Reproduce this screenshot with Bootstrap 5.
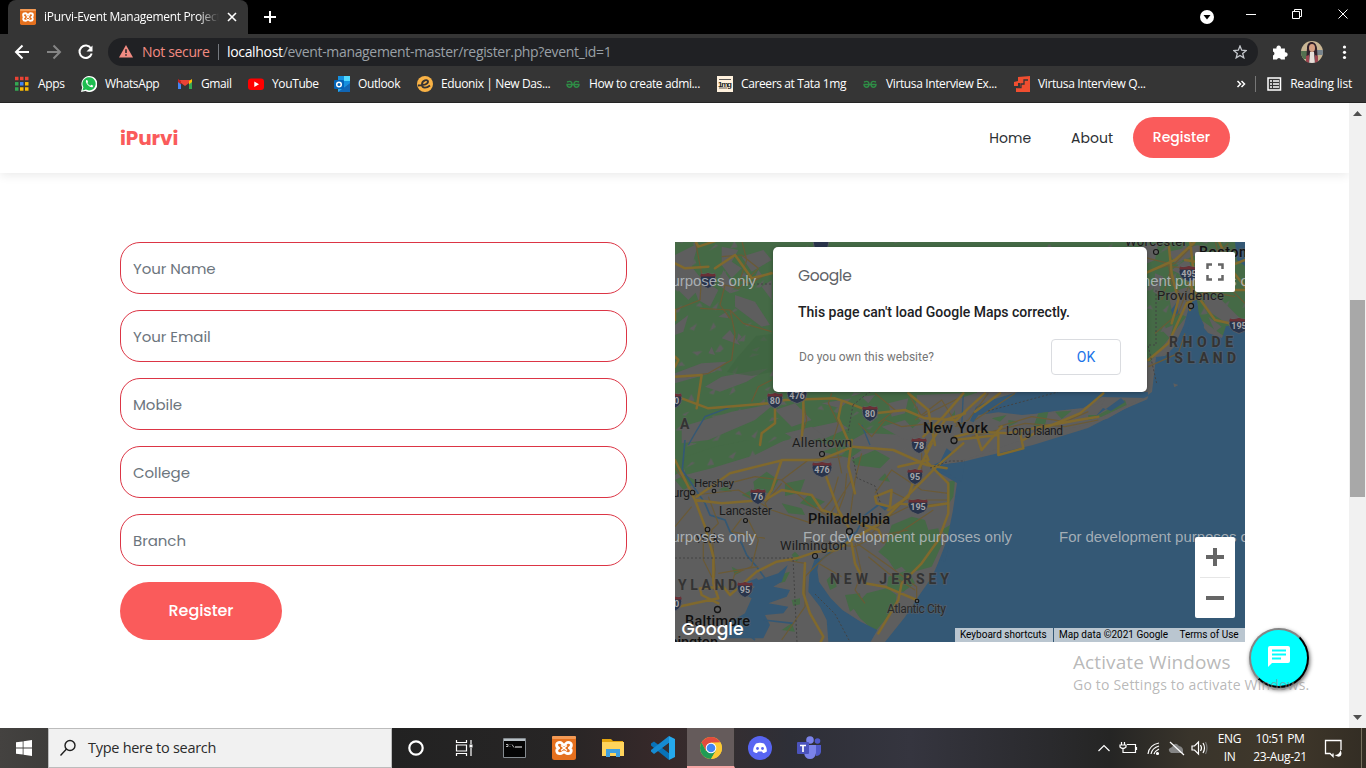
<!DOCTYPE html>
<html lang="en">
<head>
<meta charset="utf-8">
<meta name="viewport" content="width=device-width, initial-scale=1">
<title>iPurvi-Event Management Project</title>
<link href="https://cdn.jsdelivr.net/npm/bootstrap@5.3.0/dist/css/bootstrap.min.css" rel="stylesheet">
<style>
  :root { --chrome:#353535; --coral:#fa5b5b; --ui:"Segoe UI","Open Sans","Noto Sans",sans-serif; --site:"Poppins","Inter",sans-serif; }
  body { width:1366px; height:768px; overflow:hidden; background:#fff; font-family:var(--ui); }
  svg { display:block; flex:none; }
  .tabstrip { height:34px; background:#000; padding-left:8px; }
  .browser-tab { width:240px; height:34px; background:var(--chrome); border-radius:8px 8px 0 0; padding:0 11px 0 12px; color:#fff; font-size:12px; letter-spacing:-.31px; }
  .tab-title { width:175px; margin-left:8px; overflow:hidden; -webkit-mask-image:linear-gradient(90deg,#000 88%,transparent); }
  .toolbar { height:36px; background:var(--chrome); }
  .omnibox { width:1150px; height:28px; border-radius:14px; background:#202124; font-size:14px; color:#9aa0a6; padding:0 11px 1px 11px; margin-left:13px; }
  .bookmarks { height:33px; background:var(--chrome); border-bottom:1px solid #242424; color:#fff; font-size:12px; letter-spacing:-.38px; padding:0 14px 4px 14px; }
  .bm-list { display:grid; grid-template-columns:67px 96px 71px 86px 83px 148px 152px 145px 152px 160px; }
  .bm-list > div { display:flex; align-items:center; gap:8px; white-space:nowrap; }
  .bm-list svg { width:16px; height:16px; }
  .viewport { height:625px; }
  .page { width:1349px; overflow:hidden; position:relative; font-family:var(--site); }
  .site-nav { height:70px; padding:0 119px 0 120px; box-shadow:0 2px 10px rgba(0,0,0,.09); }
  .site-brand { color:var(--coral); font-weight:700; font-size:20px; letter-spacing:-.1px; }
  .site-link { color:#2c3034; font-size:14px; }
  .pill { background:var(--coral); border:0; color:#fff; border-radius:30px; }
  .nav-pill { width:97px; height:41px; border-radius:21px; font-size:14px; font-weight:500; letter-spacing:0; margin-left:20px; margin-bottom:1px; }
  .signup { padding:69px 104px 0 120px; gap:48px; }
  .fields { width:507px; gap:16px; }
  .fields .form-control { height:52px; border:1px solid #dc3545; border-radius:20px; padding:7px 12px 6px; font-size:15px; }
  .fields .form-control::placeholder { color:#6c757d; opacity:1; letter-spacing:-.05px; }
  .send { width:162px; height:58px; font-size:16px; font-weight:500; letter-spacing:-.1px; }
  .map-box { width:570px; height:400px; position:relative; overflow:hidden; font-family:Roboto,sans-serif; }
  .map-dialog { position:absolute; left:98px; top:5px; width:374px; height:145px; background:#fff; border-radius:5px; padding:17px 26px 17px 25px; box-shadow:0 1px 4px rgba(0,0,0,.3); }
  .map-ok { width:70px; height:36px; border:1px solid #dadce0; border-radius:4px; background:#fff; color:#1a73e8; font-size:14px; }
  .ctl { position:absolute; right:10px; width:40px; background:#fff; border-radius:2px; }
  .attrib { position:absolute; right:0; bottom:0; height:14px; font-size:10px; color:#000; line-height:14px; }
  .attrib span { background:#bac6d0; padding:0 6.4px 0 5px; white-space:nowrap; }
  .scrollbar-y { width:17px; background:#f1f1f1; padding:8px 1px; }
  .thumb { height:197px; background:#a8a8a8; margin-top:184px; margin-bottom:auto; }
  .chat { position:absolute; left:1249px; top:525px; width:60px; height:60px; border-radius:50%; background:#0ff; border:2px outset #888; border-color:#858585 #111 #111 #858585; box-shadow:1px 2px 4px rgba(0,0,0,.6); }
  .activate { position:absolute; left:1073px; top:546px; color:rgba(140,140,140,.62); white-space:nowrap; font-family:var(--ui); }
  .taskbar { height:40px; background:linear-gradient(90deg,#444240 0,#3e3d3b 48px,#222 392px,#272525 560px,#37292a 665px,#352e30 720px,#2e2f37 790px,#35353f 910px,#2a2a2d 1050px,#252524 1110px,#39342b 1190px,#40382b 1280px,#332d24 1366px); color:#fff; }
  .win-search { width:344px; height:40px; background:#f1f1f1; border:1px solid #bcbcbc; color:#2b2b2b; font-size:14.5px; letter-spacing:-.28px; padding-left:10px; }
  .task-icon { width:49px; height:40px; display:flex; align-items:center; justify-content:center; }
  .task-on { background:#655b5b; border-right:1px solid #343030; border-bottom:2px solid #f7a6a6; }
  .clock { font-size:12px; line-height:18px; letter-spacing:-.35px; text-align:center; white-space:nowrap; }
</style>
</head>
<body>
<svg width="0" height="0" class="position-absolute">
  <defs>
    <symbol id="xampp" viewBox="0 0 24 24"><rect width="24" height="24" rx="2.500" fill="#e4701e"/><rect width="24" height="3" rx="1" fill="#f39a55"/><path d="M8 6.300c-4.300 0-4.300 4.400-1.300 5.700-3 1.300-2.500 5.700 1.300 5.700 2.300 0 2.700-1.700 4-1.700s1.700 1.700 4 1.700c3.800 0 4.300-4.400 1.300-5.700 3-1.300 3-5.700-1.300-5.700-2 0-2.600 2.700-4 2.700s-2-2.700-4-2.700z" fill="none" stroke="#fff" stroke-width="2.800" stroke-linejoin="round"/><path d="M9 9.500l6 5M15 9.500l-6 5" stroke="#fff" stroke-width="1.500"/></symbol>
    <symbol id="gfg" viewBox="0 0 16 16"><g fill="none" stroke="#2f8d46" stroke-width="1.400"><path d="M2 6q5-2 5 2.200c0 4-5 4-5 .3h12c0 3.700-5 3.700-5-.3Q9 4 14 6"/></g></symbol>
    <g id="sh"><path d="M-7-6.500Q-4-5 0-7 4-5 7-6.500 10 5 0 8.500-10 5-7-6.500z" fill="#29344b" stroke="#67676a" stroke-width=".7"/><path d="M-7-6.500Q-4-5 0-7 4-5 7-6.500l.8 3h-15.600z" fill="#6b3035"/></g>
    <g id="shw"><path d="M-9-6.500Q-5-5 0-7 5-5 9-6.500 13 5 0 8.500-13 5-9-6.500z" fill="#29344b" stroke="#67676a" stroke-width=".7"/><path d="M-9-6.500Q-5-5 0-7 5-5 9-6.500l.8 3h-19.600z" fill="#6b3035"/></g>
    <pattern id="clearings" width="86" height="67" patternUnits="userSpaceOnUse" patternTransform="rotate(-17)"><path fill="#5e5e5e" d="M4 6l9-4-3 6zM25 12l5-3 2 5zM43 3l10 2-6 3zM65 10l7-6 2 5-4 2zM10 25l4-3 7 3zM36 27l11-5-5 6zM60 27l5-2 1 5zM75 34l8-4-5 7zM3 45l8-4 2 2zM24 49l6-6 1 7zM47 47l9-3-5 6zM66 55l6-7 1 5zM15 60l8-1-5 3z"/></pattern>
  </defs>
</svg>

<header>
  <div class="tabstrip d-flex align-items-center">
    <div class="browser-tab d-flex align-items-center">
      <svg width="16" height="16"><use href="#xampp"/></svg>
      <div class="tab-title text-nowrap">iPurvi-Event Management Project</div>
      <svg width="10" height="10" class="ms-auto" viewBox="0 0 10 10"><path d="M1 1l8 8M9 1L1 9" stroke="#fff" stroke-width="1.600"/></svg>
    </div>
    <svg width="14" height="14" style="margin-left:15px" viewBox="0 0 14 14"><path d="M7 1v12M1 7h12" stroke="#fff" stroke-width="2"/></svg>
    <svg width="167" height="34" viewBox="1199 0 167 34" class="ms-auto"><circle cx="1207" cy="17" r="7" fill="#fff"/><path d="M1203.500 15h7l-3.500 4.500z" fill="#000"/><g fill="none" stroke="#fff"><path d="M1246 14.500h10M1292.500 11.500h7v7h-7zM1294.500 11.500v-2h7v7h-2M1338.500 9.500l9 9m0-9l-9 9"/></g></svg>
  </div>
  <div class="toolbar d-flex align-items-center">
    <svg width="95" height="36" viewBox="0 34 95 36" fill="none" stroke-width="2"><path d="M29 52H17M22.500 45.500L16 52l6.500 6.500" stroke="#fff"/><path d="M47 52h12M53.500 45.500L60 52l-6.500 6.500" stroke="#858585"/><path d="M91 48.500a6.200 6.200 0 1 0 .7 5" stroke="#fff"/><path d="M92.500 45.500v6h-6z" fill="#fff"/></svg>
    <div class="omnibox d-flex align-items-center">
      <svg width="14" height="13" viewBox="0 0 14 13"><path d="M7 0l7 12.500H0z" fill="#f28b82"/><path d="M7 4.300v3.700M7 9.200v1.600" stroke="#202124" stroke-width="1.500"/></svg>
      <span style="color:#f28b82;margin-left:9px;letter-spacing:-.35px">Not secure</span>
      <span class="vr mx-2" style="height:16px;margin-top:6px;opacity:.7"></span>
      <span style="letter-spacing:-.33px;margin-left:.5px"><span class="text-white">localhost</span>/event-management-master/register.php?event_id=1</span>
      <svg width="14" height="14" class="ms-auto" viewBox="0 0 14 14"><path d="M7 1l1.700 4.200 4.500.3-3.500 2.900 1.100 4.400L7 10.400l-3.800 2.400 1.100-4.400L.8 5.500l4.500-.3z" fill="none" stroke="#c4c7cc" stroke-width="1.300"/></svg>
    </div>
    <svg width="108" height="36" viewBox="1258 34 108 36"><path d="M1273 48.500h3.500a2.300 2.300 0 1 1 4.400 0h4v3.800a2.300 2.300 0 1 1 0 4.500v2.700h-4a2 2 0 0 0-3.900 0h-4v-3.900a2.100 2.100 0 0 0 0-4z" fill="#fff"/><clipPath id="av"><circle cx="1312" cy="52" r="11"/></clipPath><g clip-path="url(#av)"><path fill="#c9b694" d="M1300 40h24v24h-24z"/><path fill="#53704f" d="M1300 51h7v8h-7z"/><path fill="#77838c" d="M1317 50h8v5h-8z"/><path fill="#32212a" d="M1307 48c0-8 9-8 10 0l1 16h-12z"/><ellipse cx="1312" cy="48" rx="3" ry="4" fill="#d7a084"/><path fill="#e7dfd9" d="M1310 52h4l1 12h-6z"/><path fill="#9c4550" d="M1306 56l3-1v9h-3zM1315 55l3 1v8h-3z"/></g><g fill="#fff"><circle cx="1344.500" cy="47" r="1.600"/><circle cx="1344.500" cy="52.300" r="1.600"/><circle cx="1344.500" cy="57.500" r="1.600"/></g></svg>
  </div>
  <div class="bookmarks d-flex align-items-center">
    <div class="bm-list">
      <div><svg viewBox="0 0 16 16"><g stroke-width="3.500" stroke-dasharray="3.500 1.500"><path d="M1 2.500h14" stroke="#ea4335"/><path d="M1 7.800h4" stroke="#34a853"/><path d="M6 7.800h4" stroke="#4285f4"/><path d="M11 7.800h4" stroke="#fbbc05"/><path d="M1 13h4" stroke="#34a853"/><path d="M6 13h9" stroke="#fbbc05"/></g></svg>Apps</div>
      <div><svg viewBox="0 0 16 16"><path d="M0 16l1.200-4.500A8 8 0 1 1 4.500 15z" fill="#fff"/><path d="M1.500 14.500l.9-3.300a6.600 6.600 0 1 1 2.500 2.400z" fill="#1fbd50"/><path d="M5.300 4c-2 2.300 3.300 8 6.200 7.200l.8-1.500-2-1-1 1C7.800 9 7 8 6.300 6.900l.8-1L6.200 4z" fill="#fff"/></svg>WhatsApp</div>
      <div><svg viewBox="0 0 16 16"><path d="M1 4v9h3V7l4 3 4-3v6h3V4z" fill="#ea4335"/><path d="M1 4.500V13h3V6.500z" fill="#4285f4"/><path d="M12 6.500V13h3V4.500z" fill="#34a853"/><path d="M12 5l3-2v3l-3 2.500z" fill="#fbbc04"/><path d="M1 3l3 2v3.500L1 6z" fill="#c5221f"/></svg>Gmail</div>
      <div><svg viewBox="0 0 16 16"><rect y="2.500" width="16" height="11.500" rx="3" fill="#f00"/><path d="M6.300 5.500v5.400L11 8.200z" fill="#fff"/></svg>YouTube</div>
      <div><svg viewBox="0 0 16 16"><path d="M4 0h12v15H4z" fill="#1490df"/><path d="M10 0h6v5h-6z" fill="#50d9ff"/><path d="M4 7l6 4 6-4v9H4z" fill="#28a8ea"/><path d="M4 16l12-9v9z" fill="#1066b5"/><rect y="4" width="10" height="9" rx="1" fill="#0364b8"/><circle cx="5" cy="8.500" r="2.300" fill="none" stroke="#fff" stroke-width="1.500"/></svg>Outlook</div>
      <div><svg viewBox="0 0 16 16"><circle cx="8" cy="8" r="8" fill="#f9b245"/><path d="M1 9.500C7 9.500 11 8 11 5.500 11 3 5 4 5 8.500c0 4.500 5 3.500 8 1" fill="none" stroke="#363333" stroke-width="1.900"/></svg>Eduonix | New Das...</div>
      <div><svg><use href="#gfg"/></svg>How to create admi...</div>
      <div><svg viewBox="0 0 16 16"><path d="M0 0h16v16H0z" fill="#fff1dd"/><text x="1" y="10.500" font-family="Liberation Sans" font-weight="700" font-size="8" textLength="14" letter-spacing="0" fill="#222">1mg</text><path d="M2 3.500h12M2 12h8" stroke="#333" stroke-width=".8"/></svg>Careers at Tata 1mg</div>
      <div><svg><use href="#gfg"/></svg>Virtusa Interview Ex...</div>
      <div><svg viewBox="0 0 16 16"><path d="M0 6l4-1V1l12-1v16H2v-4h4V7H4v3H0z" fill="#f04e30"/><path d="M2.500 11.500H7V8h3V4h4" fill="none" stroke="#353535" stroke-width="1.300"/></svg>Virtusa Interview Q...</div>
    </div>
    <svg width="46" height="20" viewBox="1236 74 46 20" class="ms-auto" fill="none"><path d="M1237.500 81l3 3-3 3M1241.500 81l3 3-3 3" stroke="#fff" stroke-width="1.500"/><path d="M1255.500 76v16" stroke="#777"/><path d="M1268 78h12.500v12H1268z" stroke="#fff" stroke-width="1.500"/><path d="M1270 81h2m1 0h6m-9 3h2m1 0h6m-9 3h2m1 0h6" stroke="#fff" stroke-width="1.500"/></svg>
    <span style="margin-left:8px;letter-spacing:-.2px">Reading list</span>
  </div>
</header>

<main class="viewport d-flex position-relative">
  <div class="page">
    <nav class="site-nav d-flex align-items-center">
      <div class="site-brand me-auto">iPurvi</div>
      <a class="site-link text-decoration-none">Home</a>
      <a class="site-link text-decoration-none" style="margin-left:40px">About</a>
      <button class="pill nav-pill">Register</button>
    </nav>
    <section class="signup d-flex">
      <form class="fields d-flex flex-column">
        <input class="form-control" placeholder="Your Name">
        <input class="form-control" placeholder="Your Email">
        <input class="form-control" placeholder="Mobile">
        <input class="form-control" placeholder="College">
        <input class="form-control" placeholder="Branch">
        <button type="button" class="pill send">Register</button>
      </form>
      <div class="map-box">
        <svg width="570" height="400" viewBox="675 242 570 400">
          <path fill="#5e5e5e" d="M675 242h570v400H675z"/>
          <!-- forests -->
          <g fill="#456a46">
            <path d="M675 242h570v90l-20 5-35-25-40 50-30-10-100 40-40-5-15 28-40 2-20 18-40-2-25 14-40-10-50 12-40 6-35 20z"/>
            <g transform="translate(675 440) scale(.33333)">
              <path d="M30 50L120 20 220 0H330L240 45 110 85 30 105zM235 125l40-30 35 25-20 40-50-5zM330 130l60-12-15 40-45 10zM400 165l50 20-30 20-45-15zM320 190l60 15 10 20-50-5zM440 35l60-20 60 15-35 25zM530 60l70-30 45 25-30 30-75-10zM650 255l60-25 40 10 10 30 30-5 10 50-30 65-70 20-20-20-20 10-20-30-30-25 20-20zM640 410l60-20 20 40-35 25-50-5zM575 460l60-15 30 20-5 40-60 70-45-40-20-30zM510 465l45-5 5 30-35 25zM310 405l35-10-15 30-20 5zM350 345l10-10 15 15-10 15zM0 120l30-15 40 20-45 25zM130 150l25-15 15 20zM820 125l20-5-5 50-20 30zM800 270l25-15-5 40z"/>
              <path d="M350 480l25-5 0 18-20 5zM455 420l20-20 10 40-20 10zM200 165l40-20 30 25-25 15zM610 120l20-20 15 25zM320 570l30-20 10 25zM170 380l30 15-20 10z"/>
            </g>
          </g>
          <path fill="url(#clearings)" d="M675 242h570v90H1147l-30 15-100 40-40 60-102 5-200 25z"/>
          <g fill="#5e5e5e" transform="translate(675 240) scale(.33333)">
            <path d="M0 45L70 10 50 80 90 130 40 180 0 140zM55 140l20-25 55 35-25 50-35-20zM140 20l50 10-20 35 30 20-30 30-30-40zM200 50l65-20 25 30-60 35zM260 140l30-20v60zM180 165l60 20 45 70-25 5-80-60zM145 90l35 50-15 20-35-25zM0 255l40-30-15 50-25 10zM0 400l80-30 75-5-35 30-50 15-70 20zM90 440l50-30 80-15 60-10-65 40-80 30zM100 340l10-20 10 25zM190 280l10 10-15 15zM230 330l25-10-10 15zM20 560l150-45 130-25-60 50-140 60-80 10zM300 510l60-20 50 50-60 20zM400 565l90-20 30 20-80 35zM440 490l90-15-35 30zM640 490l60-15-10 45-40 10zM620 560l70-20 40 45-40 15zM725 465l140-5-30 60-60 60-45-45z"/>
            <path d="M560 470l40-5-20 25zM580 520l30 10-25 20zM330 580l80-20 40 30-70 20zM140 295l25-25 30 45zM130 230l25-15 5 20zM250 90l15 20-30 10z"/>
          </g>
          <g fill="#5e5e5e" transform="translate(955 240) scale(.33333)">
            <path d="M560 20l50-10-10 50-35 15zM600 100l25 10-15 55-15-10zM640 35l90-20 20 20-90 35zM640 160l60-20 30 55-35 35-45-20zM620 270l35-15-10 40zM740 160l60 20 70 70-25 20-90-60zM590 355l50-15-10 25zM0 480l60-20 110-5-120 70-50 50zM650 90l50-35 20 70zM760 230l40 30-20 15z"/>
          </g>
          <path fill="#3e643f" opacity=".6" d="M727 372l10-14 19-22 16-2v38l-20 4-14-2z"/>
          <!-- sea, sound and bays -->
          <g fill="#345875">
            <path d="M885 642l20-25 13-20 14-20 6-14 9-23 6-30 4-27-19-11-8-4 8-3 24-3 16-4 55-13 55-17 50-26 14-10 4-35 9-1 9-9 10-22 7-25 6 0 3 23 8 10 14 5 4-12h20v326z"/>
            <path d="M1018 392h130v6l-46-1-19 11-28 3-32 5-25-2-20 10-8-3 6-14 12-6z"/>
            <path d="M1186 338l4-18 8-8 6 13-2 22zM1235 242h10v24l-8-6zM1171 310l5-7 3 11-5 4z"/>
          </g>
          <!-- Long Island -->
          <g transform="translate(955 240) scale(.33333)">
            <path fill="#5e5e5e" d="M30 585l40-60 60-8 70 8 110-10 90-10 50-28-20 38 20 14 45-22 85-39-3 10-70 30-50 28-78 22-70 16-120 30-100 36-60 19-65 5z"/>
            <path fill="#456a46" d="M110 535l45-10-20 20zM250 520l30-5-10 40-35 5zM300 515l50-3-30 25zM400 525l30 0 80-45 5 15-75 35-40 10zM160 540l30 5-30 15z"/>
            <path fill="#5e5e5e" d="M655 430l15 5-12 7z"/>
          </g>
          <!-- Delaware and Chesapeake bays, rivers -->
          <g transform="translate(675 440) scale(.33333)" fill="#345875">
            <path d="M420 355l15 0-8 35 5 35 35 50 35 35 55 35 50 25-20 35H460l-5-65-20-40-35-45 3-50zM250 420l60-20 28-25-18 50-25 15 50 10-10 20-55 20 60 10-15 20-55 5 15 30-20 40H140l20-45 50-30 20-45-20-10 30-25-35-10 40-15z"/>
            <path d="M765 80l30-15 20-40 20 15-35 35 70-10-10 60-50-30z"/>
            <path d="M800 360l15-60 10 5-15 60zM610 195l30 5-10 12z"/>
            <path fill="none" stroke="#345875" stroke-width="5" d="M30 0L22 90 90 190 105 225 150 240 165 275 200 310 215 345 245 380 270 415M610 195l-40 30-25 50-70 55-50 40M240 600l-60-50M265 540l90 10"/>
          </g>
          <g transform="translate(675 240) scale(.33333)" fill="none" stroke="#345875" stroke-width="4"><path d="M170 500l-80 30-30 50-20 35M585 615l-25-60M865 460l-5 100"/></g>
          <path fill="#345875" d="M1095 417l8-9 8 3 14-9-4-4-22 16z"/>
          <!-- local roads -->
          <g fill="none" stroke="#6b5a35" stroke-width="3.600" stroke-linejoin="round">
            <g transform="translate(675 240) scale(.33333)"><path d="M60 0L80 100 75 180 0 210M75 205l90 5 40 40 85 25M140 50l60-5 50 40-60 60-40-10-15 60 30 40M165 210l15 70-10 80-70 40-65 10M200 0l15 60-20 60 30 10 65-35M290 420l-40 20-20 45M470 460l-10 30 30 60-20 65M380 460l15 80-20 60M550 550l40 40 40-50 50 20 90-10M600 460l60 50-50 40M700 460l40 70 120-60M720 540l80-60 50 80"/></g>
            <g transform="translate(675 440) scale(.33333)"><path d="M160 130l80-20 80 10 80-60 100-10M0 85l60 80 130-15 100 60 120 40 60-70 20-70M320 130l-50 60 10 20M320 120l80 70 60 40 70-110M560 40l-20 80-15 110 100 80 150-100M530 300l-80 50-60 60 0 90-70 100M540 310l20 90-20 50 30 40M545 310l100 70 80 60 0 40M450 310l90 10 60-30 100-20M430 370l70 40M600 160l50-70 90 60 80 10M740 40l0 80-50 60-100 100M640 230l60-30 110-10M220 240l30 60-20 80-50 20-20 60M100 170l30 80-20 20 10 120-5 60M0 300l85 0 0 60 30 60M200 235l-30 40 100 20M330 360l60 10M580 350l60 50 80 50M130 400l120-20M500 100l-20-100M480 240l30-80 5-60M0 260l50-60M820 180l-120 0-60-30"/></g>
            <g transform="translate(955 240) scale(.33333)"><path d="M560 100l100-30 60-60M620 180l30-100 90 10 80-80M600 280l70-60 30-80M560 50l80 20 10 60 50 60M780 0l30 130 60 60M740 150l100 20M580 380l90-40 20-60M100 460l-60 80-40 20M180 460L60 540M50 590l160-40 120 10 100-20M130 560l100-30 100 15 70-30"/></g>
          </g>
          <!-- motorways -->
          <g fill="none" stroke="#80692d" stroke-width="7.500" stroke-linejoin="round" stroke-linecap="round">
            <g transform="translate(675 240) scale(.33333)"><path d="M0 70l30 15 70-5M120 85l60-40 50 70 60-15M60 0l10 20 60-20M0 210l0 30M0 350l10 10-10 20M0 410l80-5-15 100M20 475l80 30 180-15 50-10 150-5 30 10 90 35 90-10 60 25 95 5M300 490v60l-40 30-5 35M385 470v60l-5 70M500 485l-10 50 35 80M745 590l60-60 60-70M760 620l50-80 60-20M700 460l60 50 20 105"/></g>
            <g transform="translate(675 440) scale(.33333)"><path d="M0 60l30 60 30 60 80 10 130-10 50-30 90 15 30 45 90 30 80 30 10 20M65 170l100-70 160-40 110 0 100-40 120 10 100 45 60 10M60 180l30 80 25 90v80l15 45-50 10-70 15M130 490l-50-25-5-20 70-5 20 25 80-70 60-30 60-10 60-20 60-5 60-40 70-40 60-60 60-60 50-50 80-70M390 370l-5 90 20 60 40 70-10 20M530 310l10 60 30 60 60 10 95 40M450 100l40 110 30 50M320 60l-30 90-20 30M530 0l-10 80 20 80M740 0l20 60-90 20M755 65l65 65 0 60-70 10-80-10M820 130l0 90-30 80-50 70-60 60-10 50-60 100M600 170l50-20-5 50-40-10zM640 210l60-40 20-60 50-100"/></g>
            <g transform="translate(955 240) scale(.33333)"><path d="M570 100l90-40 60-55M640 0l10 100 20 80-20 70M580 360l60-50 55-120 70-40 105 0M705 0l10 90-10 120M700 130l80 110 90 20M790 0l40 90 40 50M690 60l130 20 50-20M0 590l60-15 100 5 100-20 110-20 60-10M0 600l130-15 0 60 75-20-10-50M0 545l40-40 50-45M60 515l75-55M205 600l50-30 120-50 70-60M60 570l20 60 60-70"/></g>
          </g>
          <g fill="none" stroke="#434343" stroke-dasharray="2 2"><path d="M745 284h28M675 558h118l4 84M853 457l4 21 18 8 5 16M815 594l20 20 15 28M930 468l20-7 15 0M988 411l70-19M1156 290v55l-8 0 9 40M853 405l15-12 4-2M853 405l-5 28"/></g>
          <!-- route shields -->
          <g font-family="Roboto" font-weight="700" font-size="9" fill="#a5a5a8" text-anchor="middle">
            <g transform="translate(708 280)"><use href="#sh"/></g>
            <g transform="translate(821 244)"><use href="#sh"/></g>
            <g transform="translate(674 400)"><use href="#sh"/><text y="4">80</text></g>
            <g transform="translate(775 400)"><use href="#sh"/><text y="4">80</text></g>
            <g transform="translate(797 395)"><use href="#shw"/><text y="4">476</text></g>
            <g transform="translate(870 413)"><use href="#sh"/><text y="4">80</text></g>
            <g transform="translate(919 445)"><use href="#sh"/><text y="4">78</text></g>
            <g transform="translate(822 469)"><use href="#shw"/><text y="4">476</text></g>
            <g transform="translate(915 476)"><use href="#sh"/><text y="4">95</text></g>
            <g transform="translate(918 506)"><use href="#shw"/><text y="4">195</text></g>
            <g transform="translate(758 496)"><use href="#sh"/><text y="4">76</text></g>
            <g transform="translate(745 589)"><use href="#sh"/><text y="4">95</text></g>
            <g transform="translate(674 603)"><use href="#sh"/><text y="4">70</text></g>
            <g transform="translate(1189 273)"><use href="#shw"/><text y="4">495</text></g>
            <g transform="translate(1239 325)"><use href="#shw"/><text y="4">195</text></g>
          </g>
          <g fill="#626262" stroke="#151515" stroke-width="1.300"><circle cx="954" cy="440.500" r="3"/><circle cx="849.500" cy="531.500" r="3"/><circle cx="717.500" cy="609.500" r="3"/><g stroke-width="1.100"><circle cx="822" cy="454" r="2.500"/><circle cx="815" cy="556" r="2.500"/><circle cx="745.500" cy="520.500" r="2"/><circle cx="714" cy="491" r="1.800"/><circle cx="692.500" cy="492.500" r="2.300"/><circle cx="707.500" cy="529.500" r="2.300"/><circle cx="917" cy="601" r="1.800"/><circle cx="1156" cy="252" r="2.500"/><circle cx="1191" cy="306" r="2.600"/></g></g>
          <g font-family="Roboto" font-size="12.500" fill="#1c1c1c" stroke="#626262" stroke-width="1.500" paint-order="stroke" stroke-opacity=".6">
            <g font-size="14.500" font-weight="500" fill="#101010"><text x="923" y="433" textLength="65">New York</text><text x="808" y="524" textLength="82">Philadelphia</text><text x="685" y="626" textLength="65">Baltimore</text><text x="642" y="646.500" textLength="76">Washington</text><text x="1199" y="257" textLength="48">Boston</text></g>
            <text x="792" y="447" textLength="60" font-size="13">Allentown</text><text x="780" y="549.500" textLength="67" font-size="13">Wilmington</text><text x="719" y="515" textLength="53">Lancaster</text><text x="694" y="487" font-size="11.500" textLength="40">Hershey</text><text x="634" y="497" textLength="56">Harrisburg</text><text x="695" y="543" textLength="24">York</text><text x="887" y="613" textLength="59" font-size="12" fill="#2a2a2a">Atlantic City</text><text x="1006" y="435" textLength="57" font-size="12">Long Island</text><text x="1157" y="299.500" textLength="67" font-size="13">Providence</text><text x="1125" y="246" textLength="62" font-size="13">Worcester</text>
            <g font-weight="700" font-size="14" fill="#333"><text x="830" y="584" textLength="119">NEW JERSEY</text><text x="637" y="590" textLength="100">MARYLAND</text><text x="1169" y="347" textLength="64">RHODE</text><text x="1166" y="363" textLength="70">ISLAND</text><text x="680" y="429">A</text></g>
          </g>
          <g font-family="Liberation Sans" font-size="15" fill="#b9bec2" fill-opacity=".85"><text x="547" y="285.500" textLength="209">For development purposes only</text><text x="1059" y="285.500" textLength="209">For development purposes only</text><text x="547" y="541.500" textLength="209">For development purposes only</text><text x="803" y="541.500" textLength="209">For development purposes only</text><text x="1059" y="541.500" textLength="209">For development purposes only</text></g>
          <text x="681.500" y="634.500" font-family="Poppins, Lato" font-weight="500" font-size="18.500" textLength="62" lengthAdjust="spacingAndGlyphs" fill="#fff">Google</text>
        </svg>
        <div class="map-dialog d-flex flex-column">
          <div style="font:400 15.5px/24px Poppins,Lato;color:#5f6368;letter-spacing:-.4px">Google</div>
          <div style="font-size:14px;font-weight:500;color:#202124;line-height:20px;margin-top:14px">This page can't load Google Maps correctly.</div>
          <div class="d-flex align-items-center justify-content-between mt-auto"><span style="font-size:12px;color:#757575;padding-left:1px">Do you own this website?</span><button class="map-ok">OK</button></div>
        </div>
        <div class="ctl d-flex align-items-center justify-content-center" style="top:10px;height:40px"><svg width="18" height="18"><path d="M1.500 6V1.500H6M12 1.500h4.500V6M16.500 12v4.500H12M6 16.500H1.500V12" fill="none" stroke="#666" stroke-width="2.500"/></svg></div>
        <div class="ctl" style="top:295px;height:81px"><svg width="40" height="81"><path d="M11 20h18M20 11v18M11 61h18" stroke="#666" stroke-width="4"/><path d="M5 40.500h30" stroke="#e6e6e6"/></svg></div>
        <div class="attrib d-flex"><span style="margin-right:1px">Keyboard shortcuts</span><span>Map data ©2021 Google</span><span>Terms of Use</span></div>
      </div>
    </section>
  </div>
  <aside class="scrollbar-y d-flex flex-column align-items-center">
    <svg width="9" height="5"><path d="M0 5h9L4.500 0z" fill="#505050"/></svg>
    <div class="thumb w-100"></div>
    <svg width="9" height="5"><path d="M0 0h9L4.500 5z" fill="#505050"/></svg>
  </aside>
  <div class="chat"><svg width="56" height="56" viewBox="1251 630 56 56"><path d="M1270 646h18a2 2 0 0 1 2 2v13a2 2 0 0 1-2 2h-16l-4 4v-19a2 2 0 0 1 2-2z" fill="#fff"/><path d="M1272 650.500h14M1272 654.500h14M1272 658.500h9" stroke="#0ff" stroke-width="1.800"/></svg></div>
  <div class="activate"><div style="font-size:19px;line-height:26px;letter-spacing:.1px">Activate Windows</div><div style="font-size:14px;line-height:20px;letter-spacing:.2px">Go to Settings to activate Windows.</div></div>
</main>

<footer class="taskbar d-flex align-items-center">
  <div style="width:48px" class="d-flex justify-content-center"><svg width="16" height="16"><path d="M0 2.300L6.700 1.400v6.200H0zM7.500 1.200L16 0v7.600H7.500zM0 8.400h6.700v6.200L0 13.700zM7.500 8.400H16V16l-8.500-1.200z" fill="#fff"/></svg></div>
  <div class="win-search d-flex align-items-center"><svg width="18" height="18"><circle cx="11" cy="6.500" r="5" fill="none" stroke="#1e1e1e" stroke-width="1.400"/><path d="M7.500 10L1.500 16.500" stroke="#1e1e1e" stroke-width="1.400"/></svg><span style="margin-left:11px">Type here to search</span></div>
  <div class="task-icon" style="width:48px"><svg width="18" height="18"><circle cx="9" cy="9" r="6.700" fill="none" stroke="#fff" stroke-width="2.200"/></svg></div>
  <div class="task-icon" style="width:47px"><svg width="18" height="16" fill="none" stroke="#fff" stroke-width="1.200"><path d="M1.500 0v2.500h10V0M1.500 5h10v6h-10zM1.500 16v-2.500h10V16M16 0v4M16 8v8"/><path d="M14.500 4.500h3v3h-3z" fill="#fff" stroke="none"/></svg></div>
  <div class="task-icon" style="width:54px"><svg width="23" height="20"><path d="M.5.500h22v19H.5z" fill="#050505" stroke="#858b90"/><path d="M1 1h21v2H1z" fill="#b8c0c5"/><path d="M3 6.500h2v2H3m4-2v.5m0 1.500v.5m2-2.500l2 3" stroke="#ddd" fill="none" stroke-width=".8"/><path d="M12 9h7" stroke="#fff"/></svg></div>
  <div class="task-icon" style="width:46px"><svg width="24" height="24"><use href="#xampp"/></svg></div>
  <div class="task-icon" style="width:52px"><svg width="22" height="20"><path d="M0 1h9l2 2h10v15H0z" fill="#e5a50e"/><path d="M0 4h22v14H0z" fill="#ffd45c"/><path d="M4 19v-8h14v8h-4v-4H8v4z" fill="#3fa0e0"/></svg></div>
  <div class="task-icon" style="width:48px"><svg width="24" height="24" viewBox="0 0 24 24"><path d="M0 7.500l3-2L18 17v7L0 9.500z" fill="#0873b9"/><path d="M0 15.500l3 2.500L18 7V0L0 14z" fill="#168bd2"/><path d="M18 0l6 3v18l-6 3z" fill="#25a9ed"/><path d="M11.500 12L18 7v10z" fill="#343034"/></svg></div>
  <div class="task-icon task-on" style="width:48px"><svg width="22" height="22" viewBox="-11 -11 22 22" style="margin-top:2px"><circle r="11" fill="#fcc934"/><path d="M-9.500-5.500A11 11 0 0 1 9.500-5.500H0L-5 3z" fill="#e14b3d"/><path d="M-9.500-5.500A11 11 0 0 0 0 11L5 2.500-5 3z" fill="#209b55"/><path d="M9.500-5.500A11 11 0 0 1 0 11L5 2.500 3-5z" fill="#fcc934"/><circle r="5.300" fill="#fff"/><circle r="4.300" fill="#4285f4"/></svg></div>
  <div class="task-icon" style="width:50px"><svg width="24" height="24"><circle cx="12" cy="12" r="12" fill="#5865f2"/><path d="M8 7.500c3-1 5-1 8 0 2.500 3 3 6 2.800 8-1.600 1.300-3 1.500-3.800 1.500l-1-1.500h-4L9 17c-.8 0-2.200-.2-3.800-1.500-.2-2 .3-5 2.800-8z" fill="#fff"/><circle cx="9.500" cy="12.500" r="1.400" fill="#5865f2"/><circle cx="14.500" cy="12.500" r="1.400" fill="#5865f2"/></svg></div>
  <div class="task-icon"><svg width="25" height="24" viewBox="0 0 25 24"><circle cx="20.500" cy="5" r="2.800" fill="#5059c9"/><circle cx="13" cy="4" r="3.800" fill="#7b83eb"/><path d="M17 9h7v7q-1 4-5 4z" fill="#5059c9"/><path d="M8 9h11v8q-1 6-6 6t-6-6z" fill="#7b83eb"/><rect y="6" width="12" height="12" rx="1" fill="#4b53bc"/><path d="M3 9.500h6M6 9.500V16" stroke="#fff" stroke-width="1.700"/></svg></div>
  <svg width="112" height="40" viewBox="1096 728 112 40" class="ms-auto" fill="none" stroke="#fff" stroke-width="1.200"><path d="M1098.500 751l5.500-5.500 5.500 5.500"/><path d="M1127 744.500h8.500v8h-9.500M1136.500 747v3M1121.500 742v3m3-3v3m-4.500 0h6v2q-3 3-6 0zM1123 749v3.500h3"/><path d="M1148 754q1-9 11-11M1151 754q1-6 8-8M1154 754q1-3 5-5"/><circle cx="1157.500" cy="753.500" r="1" fill="#fff"/><path d="M1171 753q-5-4 1-6 3-6 7-1 5 1 4 7z" fill="#858585" stroke="none"/><path d="M1170 742l14 13"/><path d="M1192 746h2.500l4-4v12l-4-4h-2.500zM1200.500 745q2 3 0 6M1203 743q3 5 0 10"/><path d="M1205.500 742q3 6 0 12" stroke="#777"/></svg>
  <div class="clock" style="width:43px">ENG<br>IN</div>
  <div class="clock" style="width:58px">10:51 PM<br>23-Aug-21</div>
  <svg width="57" height="40" viewBox="1309 728 57 40" fill="none" stroke="#fff" stroke-width="1.300"><path d="M1341 750v-9.500h-15.500v13h4.500l3 3v-3"/><path d="M1340.500 750q-1 5-6 5 6 4 7-1 0-2-1-4z" fill="#fff" stroke="none"/><path d="M1361.500 728v40" stroke="#77705f" stroke-width="1"/></svg>
</footer>
<script src="https://cdn.jsdelivr.net/npm/bootstrap@5.3.0/dist/js/bootstrap.bundle.min.js"></script>
</body>
</html>
